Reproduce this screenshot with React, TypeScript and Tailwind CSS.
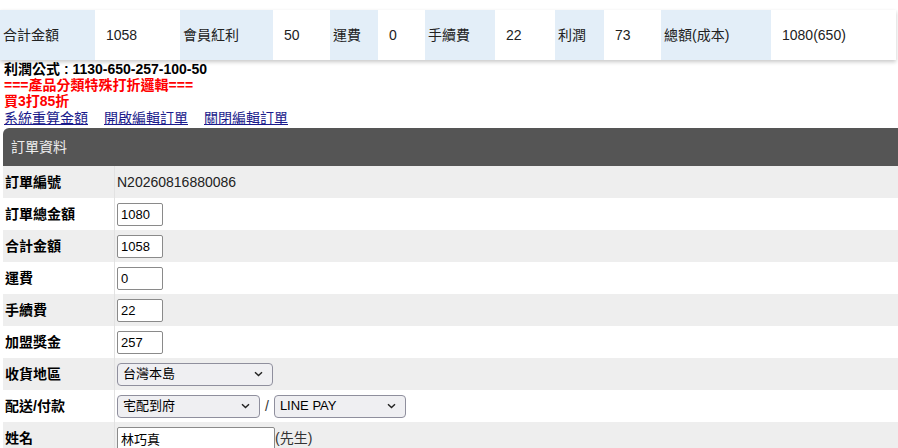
import React from 'react';

type Cell = { label: string; value: string; lw: string; vw: string };

const summary: Cell[] = [
  { label: '合計金額', value: '1058', lw: 'w-[95px]', vw: 'w-[85px]' },
  { label: '會員紅利', value: '50', lw: 'w-[93px]', vw: 'w-[57px]' },
  { label: '運費', value: '0', lw: 'w-[48px]', vw: 'w-[47px]' },
  { label: '手續費', value: '22', lw: 'w-[70px]', vw: 'w-[60px]' },
  { label: '利潤', value: '73', lw: 'w-[49px]', vw: 'w-[57px]' },
  { label: '總額(成本)', value: '1080(650)', lw: 'w-[110px]', vw: 'flex-1' },
];

const Chevron = () => (
  <svg
    className="pointer-events-none absolute right-[10px] top-1/2 -translate-y-1/2"
    width="9"
    height="6"
    viewBox="0 0 9 6"
    fill="none"
  >
    <path d="M1 1.2 L4.5 4.6 L8 1.2" stroke="#222" strokeWidth="1.4" />
  </svg>
);

const Select = ({ value, width }: { value: string; width: string }) => (
  <div className={`relative h-[23px] ${width}`}>
    <select
      defaultValue={value}
      className="h-full w-full appearance-none rounded-[4px] border border-[#8f8f9d] bg-[#efeff2] pl-[5px] text-[13px] text-black outline-none"
    >
      <option>{value}</option>
    </select>
    <Chevron />
  </div>
);

const TextInput = ({ value, width }: { value: string; width: string }) => (
  <input
    defaultValue={value}
    className={`h-[23px] ${width} rounded-[2px] border border-[#8a8a8a] bg-white px-[3px] text-[13px] text-black outline-none`}
  />
);

const Row = ({ label, gray, children }: { label: string; gray?: boolean; children: React.ReactNode }) => (
  <div className={`flex h-[32px] ${gray ? 'bg-[#eeeeee]' : 'bg-white'}`}>
    <div className="flex w-[112px] items-center border-r border-[#e2e2e2] pl-[2px] font-bold text-black">{label}</div>
    <div className="flex flex-1 items-center pl-[2px]">{children}</div>
  </div>
);

export default function App() {
  return (
    <div
      className="h-[448px] w-[898px] overflow-hidden bg-white text-[14px] text-black"
      style={{ fontFamily: '"Liberation Sans", "Noto Sans CJK TC", sans-serif' }}
    >
      {/* 訂單金額摘要 */}
      <div className="pt-[10px]">
        <div className="flex h-[50px] w-[896px] shadow-[0_2px_4px_rgba(0,0,0,0.22)]">
          {summary.map((c) => (
            <React.Fragment key={c.label}>
              <div className={`flex items-center bg-[#e3eef8] pl-[3px] text-[#222] ${c.lw}`}>{c.label}</div>
              <div className={`flex items-center bg-white pl-[11px] text-[#222] ${c.vw}`}>{c.value}</div>
            </React.Fragment>
          ))}
        </div>
      </div>

      <div className="pl-[4px] pt-[1px] leading-[16px]">
        <div className="font-bold">利潤公式 : 1130-650-257-100-50</div>
        <div className="font-bold text-[#ff0000]">===產品分類特殊打折邏輯===</div>
        <div className="font-bold text-[#ff0000]">買3打85折</div>
        <div className="flex gap-[16px] pt-[1px] text-[#1a1a8c]">
          <a href="#" className="underline">系統重算金額</a>
          <a href="#" className="underline">開啟編輯訂單</a>
          <a href="#" className="underline">關閉編輯訂單</a>
        </div>
      </div>

      {/* 訂單資料 */}
      <div className="ml-[3px] mt-[2px]">
        <div className="flex h-[38px] items-center rounded-tl-[6px] bg-[#555555] pl-[8px] text-[#eeeeee]">訂單資料</div>
        <Row label="訂單編號" gray>
          <span className="text-[#222]">N20260816880086</span>
        </Row>
        <Row label="訂單總金額">
          <TextInput value="1080" width="w-[46px]" />
        </Row>
        <Row label="合計金額" gray>
          <TextInput value="1058" width="w-[46px]" />
        </Row>
        <Row label="運費">
          <TextInput value="0" width="w-[46px]" />
        </Row>
        <Row label="手續費" gray>
          <TextInput value="22" width="w-[46px]" />
        </Row>
        <Row label="加盟獎金">
          <TextInput value="257" width="w-[46px]" />
        </Row>
        <Row label="收貨地區" gray>
          <Select value="台灣本島" width="w-[156px]" />
        </Row>
        <Row label="配送/付款">
          <Select value="宅配到府" width="w-[143px]" />
          <span className="px-[5px] text-[#333]">/</span>
          <Select value="LINE PAY" width="w-[132px]" />
        </Row>
        <Row label="姓名" gray>
          <TextInput value="林巧真" width="w-[158px]" />
          <span className="text-[#333]">(先生)</span>
        </Row>
      </div>
    </div>
  );
}
